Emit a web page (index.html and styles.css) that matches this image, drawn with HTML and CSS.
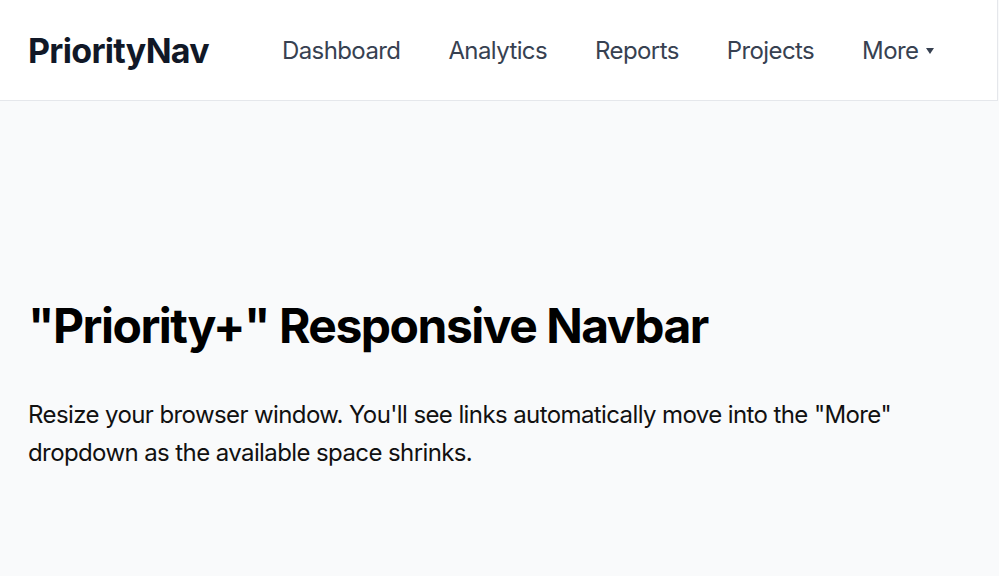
FILE: index.html
```html
<!DOCTYPE html>
<html lang="en">
<head>
  <meta charset="UTF-8">
  <meta name="viewport" content="width=device-width, initial-scale=1.0">
  <title>PriorityNav</title>
  <link rel="stylesheet" href="styles.css">
</head>
<body>
  <header class="navbar">
    <a href="#" class="logo">PriorityNav</a>
    <nav>
      <ul class="links">
        <li><a href="#">Dashboard</a></li>
        <li><a href="#">Analytics</a></li>
        <li><a href="#">Reports</a></li>
        <li><a href="#">Projects</a></li>
        <li class="more"><button type="button">More<span class="caret"></span></button></li>
      </ul>
    </nav>
  </header>

  <main class="content">
    <h1>"Priority+" Responsive Navbar</h1>
    <p>Resize your browser window. You'll see links automatically move into the "More" dropdown as the available space shrinks.</p>
  </main>
</body>
</html>
```

FILE: styles.css
```css
html * {
  font-family: Inter, "Noto Sans", sans-serif;
}

body {
  margin: 0;
  min-height: 100vh;
  background-color: #f9fafb;
  color: #111;
}

/* top bar */
.navbar {
  display: flex;
  align-items: center;
  height: 100px;
  padding: 0 28px;
  background-color: #fff;
  border-bottom: 1px solid #e5e7eb;
  border-right: 1px solid #e5e7eb;
  margin-right: 1px;
}

.logo {
  font-size: 34px;
  font-weight: 700;
  color: #111827;
  text-decoration: none;
  letter-spacing: -0.7px;
  margin-right: 73px;
  white-space: nowrap;
}

.links {
  display: flex;
  align-items: center;
  gap: 48px;
  list-style: none;
  margin: 0;
  padding: 0;
}

.links li {
  white-space: nowrap;
}

.links a,
.links button {
  font-size: 24px;
  color: #374151;
  text-decoration: none;
  letter-spacing: -0.6px;
}

.links button {
  display: flex;
  align-items: center;
  border: none;
  background: none;
  padding: 0;
  cursor: pointer;
}

.caret {
  width: 0;
  height: 0;
  margin-left: 8px;
  margin-top: 2px;
  border-left: 4px solid transparent;
  border-right: 4px solid transparent;
  border-top: 6px solid #374151;
}

/* page body */
.content {
  padding: 196px 28px 0;
}

.content h1 {
  font-size: 48px;
  line-height: 1.2;
  font-weight: 700;
  letter-spacing: -1.5px;
  margin: 0 0 41px;
  color: #000;
}

.content p {
  font-size: 24px;
  line-height: 1.6;
  letter-spacing: -0.6px;
  margin: 0;
}
```
